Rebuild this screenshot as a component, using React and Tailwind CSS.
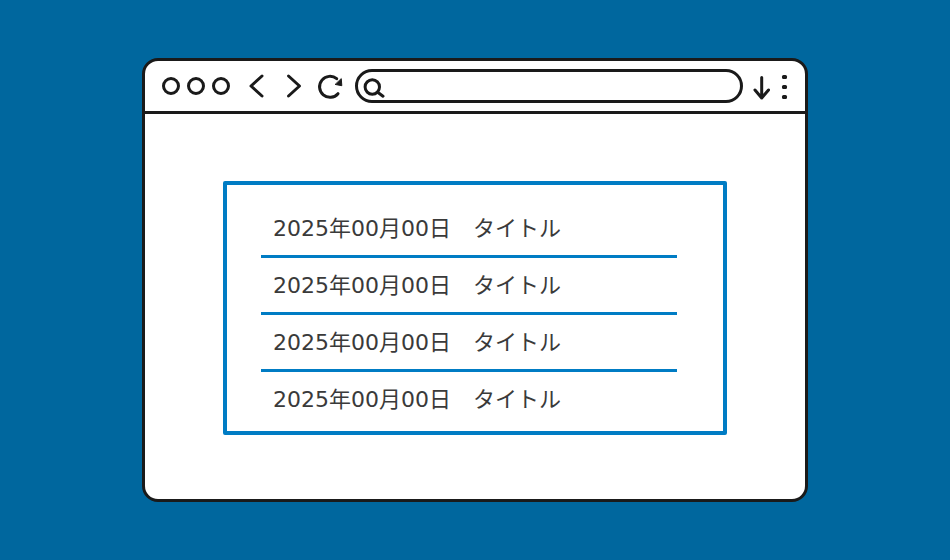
import React from "react";

const rows = [1, 2, 3, 4];

const Dot = () => (
  <span className="block w-[18px] h-[18px] rounded-full border-[3px] border-[#1a1a1a]" />
);

const KebabDot = () => <span className="block w-[5px] h-[4px] rounded-[1.5px] bg-[#1a1a1a]" />;

const Toolbar = () => (
  <div className="h-[50px] flex items-center pl-[17px] border-b-[3px] border-[#1a1a1a] box-content">
    <div className="flex gap-[7px]">
      <Dot />
      <Dot />
      <Dot />
    </div>
    <svg width="20" height="28" viewBox="0 0 20 28" className="ml-[16px]" fill="none" stroke="#1a1a1a" strokeWidth="3" strokeLinecap="round" strokeLinejoin="round">
      <path d="M16 4 L5 14 L16 24" />
    </svg>
    <svg width="20" height="28" viewBox="0 0 20 28" className="ml-[18px]" fill="none" stroke="#1a1a1a" strokeWidth="3" strokeLinecap="round" strokeLinejoin="round">
      <path d="M4.5 4 L15.5 14 L4.5 24" />
    </svg>
    <svg width="28" height="28" viewBox="0 0 28 28" className="ml-[12px]" fill="none" stroke="#1a1a1a" strokeWidth="3" strokeLinecap="round" strokeLinejoin="round">
      <path d="M20.7 6.7 A10.5 10.5 0 1 0 22 21.7" />
      <path d="M19.5 12.5 L25.8 13.7 L25.3 7 Z" fill="#1a1a1a" strokeWidth="1" />
    </svg>
    <div className="ml-[11px] w-[388px] h-[34px] rounded-full border-[3px] border-[#1a1a1a] flex items-center pl-[4px]">
      <svg width="24" height="24" viewBox="0 0 24 24" fill="none" stroke="#1a1a1a" strokeWidth="3" strokeLinecap="round">
        <circle cx="10.3" cy="13" r="7.2" />
        <path d="M15.7 18.2 L21 22.2" />
      </svg>
    </div>
    <svg width="20" height="28" viewBox="0 0 20 28" className="ml-[9px]" fill="none" stroke="#1a1a1a" strokeWidth="3" strokeLinecap="round" strokeLinejoin="round">
      <path d="M9.7 5.5 L9.7 26 M3 18 L9.7 26 L16.5 18" />
    </svg>
    <div className="ml-[10px] mt-[2px] flex flex-col gap-[6px]">
      <KebabDot />
      <KebabDot />
      <KebabDot />
    </div>
  </div>
);

export default function App() {
  return (
    <div className="w-[950px] h-[560px] bg-[#00679e] flex items-center justify-center">
      <div className="w-[666px] h-[444px] bg-white rounded-[16px] border-[3px] border-[#1a1a1a] overflow-hidden">
        <Toolbar />
        <div className="flex justify-center pt-[67px]">
          <div className="w-[504px] h-[254px] border-[4px] border-[#007cc4] rounded-[2px] pt-[16px] pl-[34px]">
            <ul className="w-[416px]">
              {rows.map((r, i) => (
                <li
                  key={r}
                  className={`h-[54px] box-content pl-[12px] flex items-center text-[22px] text-[#3a3a3a] font-['DejaVu_Sans','Noto_Sans_CJK_JP',sans-serif] ${
                    i < rows.length - 1 ? "border-b-[3px] border-[#007cc4]" : ""
                  }`}
                >
                  2025年00月00日　タイトル
                </li>
              ))}
            </ul>
          </div>
        </div>
      </div>
    </div>
  );
}
